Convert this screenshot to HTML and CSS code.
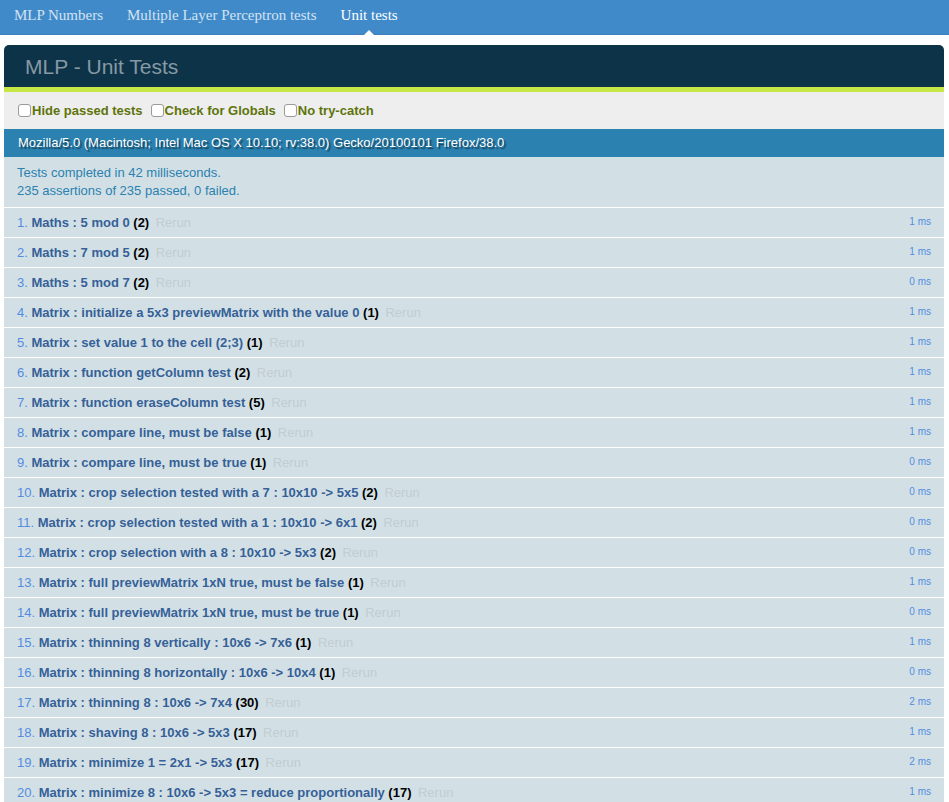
FILE: index.html
```
<!DOCTYPE html>
<html>
<head>
<meta charset="utf-8">
<title>MLP - Unit Tests</title>
<link rel="stylesheet" href="styles.css">
</head>
<body>
<nav class="topnav">
  <a class="nav-item" href="#">MLP Numbers</a>
  <a class="nav-item" href="#">Multiple Layer Perceptron tests</a>
  <a class="nav-item active" href="#">Unit tests</a>
</nav>
<div class="qunit">
  <h1 class="qunit-header">MLP - Unit Tests</h1>
  <div class="qunit-banner"></div>
  <div class="toolbar">
    <label class="opt"><input type="checkbox" class="cb">Hide passed tests</label>
    <label class="opt"><input type="checkbox" class="cb">Check for Globals</label>
    <label class="opt"><input type="checkbox" class="cb">No try-catch</label>
  </div>
  <div class="useragent">Mozilla/5.0 (Macintosh; Intel Mac OS X 10.10; rv:38.0) Gecko/20100101 Firefox/38.0</div>
  <div class="testresult">Tests completed in 42 milliseconds.<br>235 assertions of 235 passed, 0 failed.</div>
  <ol class="tests">
    <li class="test"><span class="num">1.</span><strong class="name">Maths : 5 mod 0 <b class="counts">(2)</b></strong><a class="rerun" href="#">Rerun</a><span class="runtime">1 ms</span></li>
    <li class="test"><span class="num">2.</span><strong class="name">Maths : 7 mod 5 <b class="counts">(2)</b></strong><a class="rerun" href="#">Rerun</a><span class="runtime">1 ms</span></li>
    <li class="test"><span class="num">3.</span><strong class="name">Maths : 5 mod 7 <b class="counts">(2)</b></strong><a class="rerun" href="#">Rerun</a><span class="runtime">0 ms</span></li>
    <li class="test"><span class="num">4.</span><strong class="name">Matrix : initialize a 5x3 previewMatrix with the value 0 <b class="counts">(1)</b></strong><a class="rerun" href="#">Rerun</a><span class="runtime">1 ms</span></li>
    <li class="test"><span class="num">5.</span><strong class="name">Matrix : set value 1 to the cell (2;3) <b class="counts">(1)</b></strong><a class="rerun" href="#">Rerun</a><span class="runtime">1 ms</span></li>
    <li class="test"><span class="num">6.</span><strong class="name">Matrix : function getColumn test <b class="counts">(2)</b></strong><a class="rerun" href="#">Rerun</a><span class="runtime">1 ms</span></li>
    <li class="test"><span class="num">7.</span><strong class="name">Matrix : function eraseColumn test <b class="counts">(5)</b></strong><a class="rerun" href="#">Rerun</a><span class="runtime">1 ms</span></li>
    <li class="test"><span class="num">8.</span><strong class="name">Matrix : compare line, must be false <b class="counts">(1)</b></strong><a class="rerun" href="#">Rerun</a><span class="runtime">1 ms</span></li>
    <li class="test"><span class="num">9.</span><strong class="name">Matrix : compare line, must be true <b class="counts">(1)</b></strong><a class="rerun" href="#">Rerun</a><span class="runtime">0 ms</span></li>
    <li class="test"><span class="num">10.</span><strong class="name">Matrix : crop selection tested with a 7 : 10x10 -&gt; 5x5 <b class="counts">(2)</b></strong><a class="rerun" href="#">Rerun</a><span class="runtime">0 ms</span></li>
    <li class="test"><span class="num">11.</span><strong class="name">Matrix : crop selection tested with a 1 : 10x10 -&gt; 6x1 <b class="counts">(2)</b></strong><a class="rerun" href="#">Rerun</a><span class="runtime">0 ms</span></li>
    <li class="test"><span class="num">12.</span><strong class="name">Matrix : crop selection with a 8 : 10x10 -&gt; 5x3 <b class="counts">(2)</b></strong><a class="rerun" href="#">Rerun</a><span class="runtime">0 ms</span></li>
    <li class="test"><span class="num">13.</span><strong class="name">Matrix : full previewMatrix 1xN true, must be false <b class="counts">(1)</b></strong><a class="rerun" href="#">Rerun</a><span class="runtime">1 ms</span></li>
    <li class="test"><span class="num">14.</span><strong class="name">Matrix : full previewMatrix 1xN true, must be true <b class="counts">(1)</b></strong><a class="rerun" href="#">Rerun</a><span class="runtime">0 ms</span></li>
    <li class="test"><span class="num">15.</span><strong class="name">Matrix : thinning 8 vertically : 10x6 -&gt; 7x6 <b class="counts">(1)</b></strong><a class="rerun" href="#">Rerun</a><span class="runtime">1 ms</span></li>
    <li class="test"><span class="num">16.</span><strong class="name">Matrix : thinning 8 horizontally : 10x6 -&gt; 10x4 <b class="counts">(1)</b></strong><a class="rerun" href="#">Rerun</a><span class="runtime">0 ms</span></li>
    <li class="test"><span class="num">17.</span><strong class="name">Matrix : thinning 8 : 10x6 -&gt; 7x4 <b class="counts">(30)</b></strong><a class="rerun" href="#">Rerun</a><span class="runtime">2 ms</span></li>
    <li class="test"><span class="num">18.</span><strong class="name">Matrix : shaving 8 : 10x6 -&gt; 5x3 <b class="counts">(17)</b></strong><a class="rerun" href="#">Rerun</a><span class="runtime">1 ms</span></li>
    <li class="test"><span class="num">19.</span><strong class="name">Matrix : minimize 1 = 2x1 -&gt; 5x3 <b class="counts">(17)</b></strong><a class="rerun" href="#">Rerun</a><span class="runtime">2 ms</span></li>
    <li class="test"><span class="num">20.</span><strong class="name">Matrix : minimize 8 : 10x6 -&gt; 5x3 = reduce proportionally <b class="counts">(17)</b></strong><a class="rerun" href="#">Rerun</a><span class="runtime">1 ms</span></li>
  </ol>
</div>
</body>
</html>
```
FILE: styles.css
```
html, body {
  margin: 0;
  padding: 0;
  background: #fff;
}
body {
  font-family: "Liberation Sans", Arial, Helvetica, sans-serif;
}
.topnav {
  position: relative;
  display: flex;
  height: 34px;
  padding-left: 2px;
  background: #418ac9;
  border-bottom: 1px solid #3b80bd;
}
.nav-item {
  position: relative;
  padding: 0 12px;
  line-height: 31px;
  font-family: "Liberation Serif", "Times New Roman", serif;
  font-size: 15px;
  color: #d3e3f3;
  text-decoration: none;
}
.nav-item.active {
  color: #fff;
}
.nav-item.active::after {
  content: "";
  position: absolute;
  left: 50%;
  bottom: -1px;
  margin-left: -5px;
  width: 0;
  height: 0;
  border-left: 5px solid transparent;
  border-right: 5px solid transparent;
  border-bottom: 5px solid #fff;
}
.qunit {
  margin: 10px 5px 0 4px;
}
.qunit-header {
  margin: 0;
  padding: 10.5px 0 10.5px 21px;
  font-size: 21px;
  line-height: 21px;
  font-weight: 400;
  color: #8699a4;
  background: #0d3349;
  border-radius: 5px 5px 0 0;
}
.qunit-banner {
  height: 5px;
  background: #c6e746;
}
.toolbar {
  display: flex;
  align-items: center;
  gap: 8px;
  padding: 9px 14px;
  line-height: 19px;
  background: #eee;
  color: #5e740b;
  font-size: 13px;
  font-weight: bold;
}
.opt {
  display: flex;
  align-items: center;
}
.cb {
  appearance: none;
  -webkit-appearance: none;
  box-sizing: border-box;
  width: 13px;
  height: 13px;
  margin: 0 1px 0 0;
  border: 1px solid #9a9a9a;
  border-radius: 3px;
  background: #fff;
}
.useragent {
  padding: 6px 14px 6px 14px;
  line-height: 16px;
  background: #2b81af;
  color: #fff;
  font-size: 13px;
  text-shadow: rgba(0, 0, 0, 0.5) 2px 2px 1px;
}
.testresult {
  padding: 7px 13px 7px 13px;
  line-height: 18px;
  color: #2b81af;
  background: #d2e0e6;
  font-size: 13px;
  border-bottom: 1px solid #fff;
}
.tests {
  list-style: none;
  margin: 0;
  padding: 0;
}
.test {
  display: flex;
  align-items: center;
  height: 29px;
  padding: 0 13px;
  font-size: 13px;
  color: #528ce0;
  background: #d2e0e6;
  border-bottom: 1px solid #fff;
  white-space: nowrap;
}
.num {
  margin-right: 3.6px;
}
.name {
  color: #366097;
  font-weight: bold;
}
.counts {
  color: #000;
}
.rerun {
  padding: 0 6.5px;
  color: #c2ccd1;
  text-decoration: none;
}
.runtime {
  margin-left: auto;
  font-size: 10px;
  margin-top: -2px;
}
```
